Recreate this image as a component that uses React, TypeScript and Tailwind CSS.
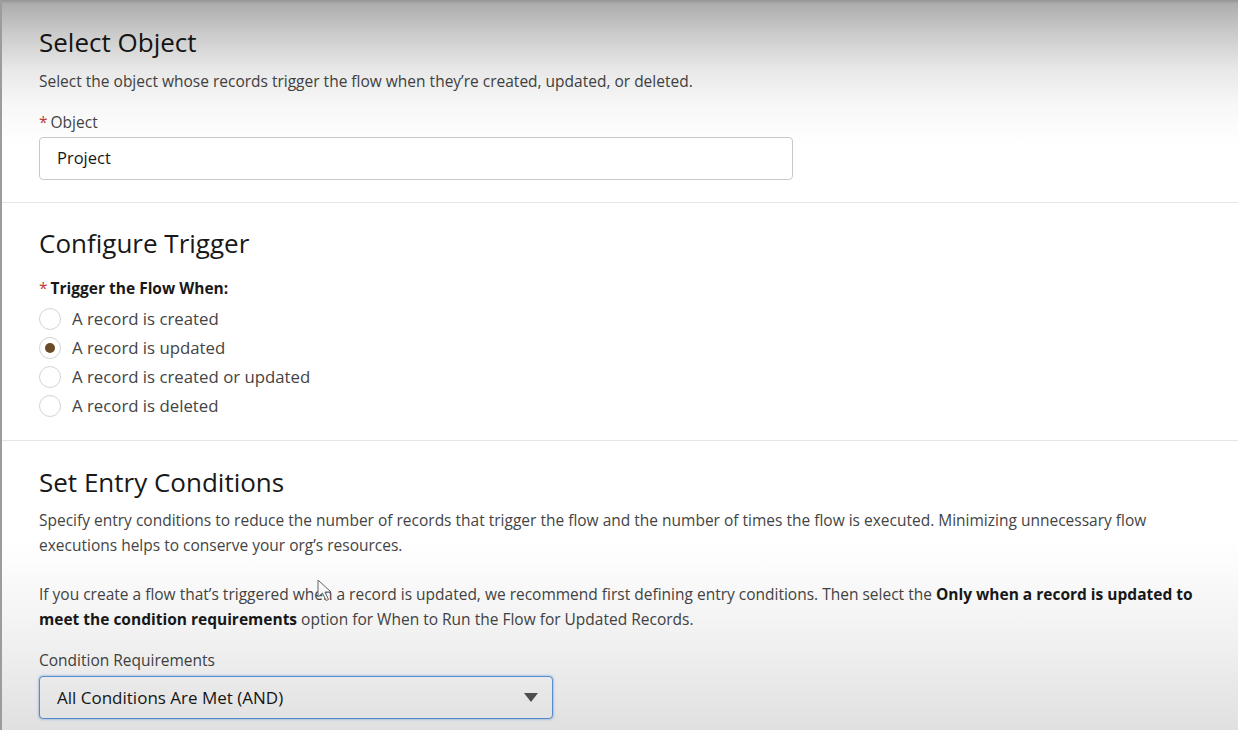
const font = { fontFamily: '"Open Sans", "Noto Sans", sans-serif' };

const triggers = [
  { label: "A record is created", checked: false },
  { label: "A record is updated", checked: true },
  { label: "A record is created or updated", checked: false },
  { label: "A record is deleted", checked: false },
];

function Radio({ checked }: { checked: boolean }) {
  return (
    <span className="w-[22px] h-[22px] rounded-full border border-[#d4d4d4] bg-white flex items-center justify-center shrink-0">
      {checked && <span className="w-[10px] h-[10px] rounded-full bg-[#6b4a26]" />}
    </span>
  );
}

function Cursor() {
  return (
    <svg className="absolute left-[315px] top-[579px] pointer-events-none" width="16" height="24" viewBox="0 0 16 24">
      <path d="M1 1 L1 18 L5.5 14 L9 21.5 L11.5 20.5 L8 13 L14 13 Z" fill="#fff" stroke="#666" strokeWidth="1" strokeLinejoin="round" />
    </svg>
  );
}

export default function App() {
  return (
    <div className="relative w-[1238px] h-[730px] overflow-hidden bg-white border-l-2 border-[#9c9c9c] text-[#444]" style={font}>
      <section className="px-[37px] pt-[26px] pb-[22px] border-b border-[#e5e5e5]">
        <h1 className="text-[26px] leading-[32px] text-[#181818]">Select Object</h1>
        <p className="mt-[13px] text-[15.5px] leading-[20px]">
          Select the object whose records trigger the flow when they’re created, updated, or deleted.
        </p>
        <div className="mt-[21px] text-[15.5px] leading-[20px]">
          <span className="text-[#c23934] mr-[3px]">*</span>Object
        </div>
        <div className="mt-[5px] w-[754px] h-[43px] rounded-[4px] border border-[#c9c9c9] bg-white flex items-center px-[17px] text-[16.5px] text-[#181818]">
          Project
        </div>
      </section>

      <section className="px-[37px] pt-[24px] pb-[20px] border-b border-[#e5e5e5]">
        <h2 className="text-[26px] leading-[32px] text-[#181818]">Configure Trigger</h2>
        <div className="mt-[19px] text-[15.5px] leading-[20px] font-bold text-[#181818]">
          <span className="text-[#c23934] font-normal mr-[3px]">*</span>Trigger the Flow When:
        </div>
        <div className="mt-[6px] flex flex-col">
          {triggers.map(t => (
            <label key={t.label} className="h-[29px] flex items-center gap-[11px] text-[16.8px]">
              <Radio checked={t.checked} />
              {t.label}
            </label>
          ))}
        </div>
      </section>

      <section className="px-[37px] pt-[25px]">
        <h2 className="text-[26px] leading-[32px] text-[#181818]">Set Entry Conditions</h2>
        <p className="mt-[10px] text-[15.5px] leading-[25px] max-w-[1162px]">
          Specify entry conditions to reduce the number of records that trigger the flow and the number of times the flow is executed. Minimizing unnecessary flow executions helps to conserve your org’s resources.
        </p>
        <p className="mt-[24px] text-[15.5px] leading-[24.5px] max-w-[1162px]">
          If you create a flow that’s triggered when a record is updated, we recommend first defining entry conditions. Then select the{" "}
          <b className="text-[#181818]">Only when a record is updated to meet the condition requirements</b> option for When to Run the Flow for Updated Records.
        </p>
        <div className="mt-[19px] text-[15.5px] leading-[20px]">Condition Requirements</div>
        <div className="mt-[6px] w-[514px] h-[43px] rounded-[4px] border border-[#5d9ce0] shadow-[0_0_3px_#7fb2ea] bg-white flex items-center justify-between pl-[17px] pr-[14px] text-[17px] text-[#181818]">
          <span>All Conditions Are Met (AND)</span>
          <svg width="14" height="9" viewBox="0 0 14 9"><path d="M0 0 H14 L7 9 Z" fill="#555" /></svg>
        </div>
      </section>

      <Cursor />
      <div className="absolute inset-x-0 top-0 h-[145px] pointer-events-none bg-[linear-gradient(to_bottom,rgba(0,0,0,0.42)_0px,rgba(0,0,0,0.32)_4px,rgba(0,0,0,0.2)_35px,rgba(0,0,0,0.09)_70px,rgba(0,0,0,0.03)_105px,rgba(0,0,0,0)_145px)]" />
      <div className="absolute inset-x-0 bottom-0 h-[190px] pointer-events-none bg-[linear-gradient(to_top,rgba(0,0,0,0.12)_0%,rgba(0,0,0,0.06)_45%,rgba(0,0,0,0)_100%)]" />
    </div>
  );
}
